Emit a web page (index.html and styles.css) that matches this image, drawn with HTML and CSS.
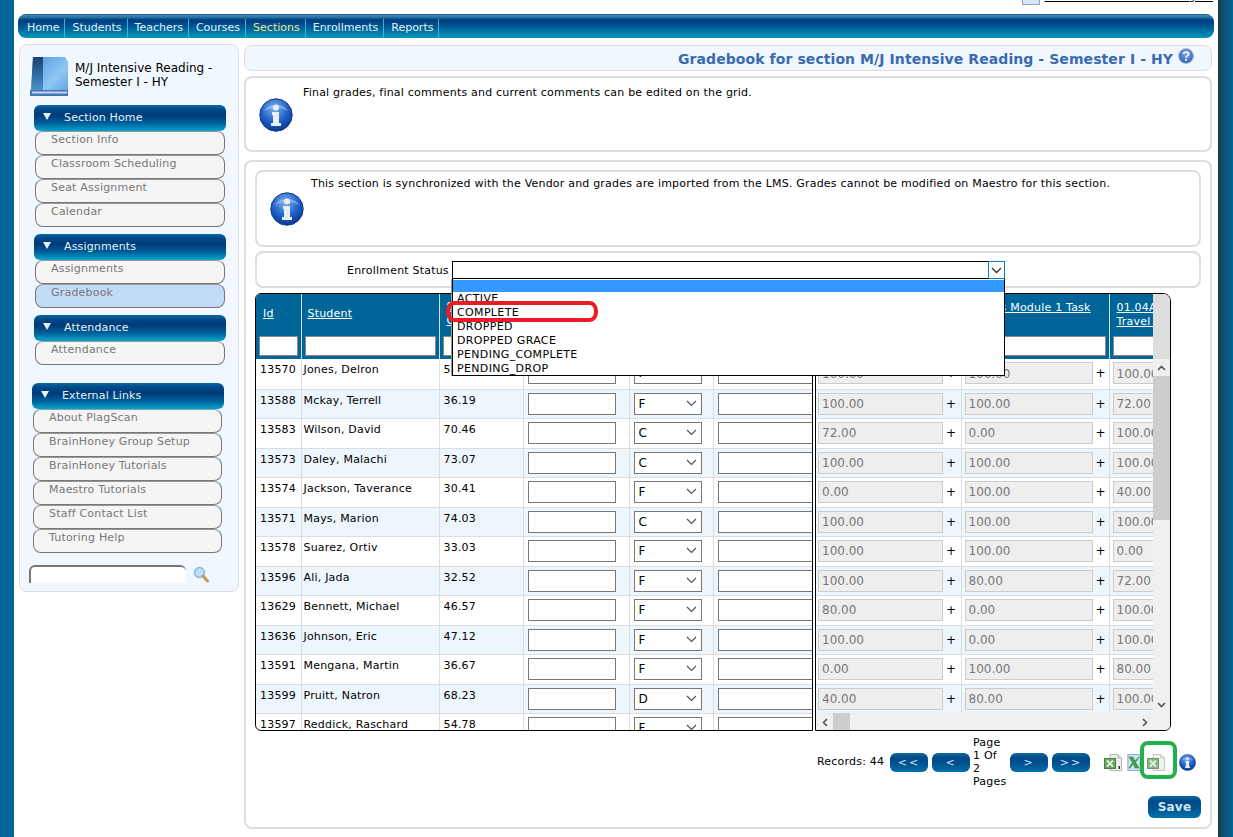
FILE: index.html
```html
<!DOCTYPE html>
<html lang="en">
<head>
<meta charset="utf-8">
<title>Gradebook</title>
<link rel="stylesheet" href="styles.css">
</head>
<body>
<svg class="defs" width="0" height="0" aria-hidden="true">
  <defs>
    <radialGradient id="infoFill" cx="45%" cy="30%" r="75%">
      <stop offset="0" stop-color="#7fb2ee"/>
      <stop offset=".55" stop-color="#1e62c8"/>
      <stop offset="1" stop-color="#0b2f8a"/>
    </radialGradient>
    <symbol id="info" viewBox="0 0 34 34">
      <circle cx="17" cy="17" r="16.2" fill="url(#infoFill)" stroke="#123a86" stroke-width="1"/>
      <path d="M5 13C8 5 26 5 29 13C22 9 12 9 5 13Z" fill="#fff" opacity=".3"/>
      <circle cx="17" cy="9.5" r="3" fill="#e8eef8"/>
      <path d="M13 14H20V25H22V28H12V25H14V17H13Z" fill="#e8eef8"/>
    </symbol>
    <symbol id="sheet" viewBox="0 0 18 17">
      <path d="M6 .5H14L17.500 4V16.500H6Z" fill="#eef0ee" stroke="#b5b9b5"/>
      <path d="M14 .5V4H17.500" fill="#d8dcd8" stroke="#b5b9b5"/>
      <rect x=".5" y="4.500" width="11" height="10" fill="#6da565" stroke="#4a7f4c"/>
      <path d="M3 6.500L9 12.500M9 6.500L3 12.500" stroke="#dff0d8" stroke-width="1.800"/>
    </symbol>
  </defs>
</svg>
<div class="page">
  <div class="strip-left"></div>
  <div class="content">
    <div class="topline">
      <svg class="env" width="18" height="5" viewBox="0 0 18 5"><rect x=".5" y="-6" width="17" height="10.500" fill="#dbe6f5" stroke="#8aa3c8"/></svg>
      <a class="messages" href="#">You have 223 new messages!</a>
    </div>
    <nav class="navbar">
      <a class="nav-link" href="#">Home</a>
      <a class="nav-link" href="#">Students</a>
      <a class="nav-link" href="#">Teachers</a>
      <a class="nav-link" href="#">Courses</a>
      <a class="nav-link nav-active" href="#">Sections</a>
      <a class="nav-link" href="#">Enrollments</a>
      <a class="nav-link" href="#">Reports</a>
    </nav>
    <div class="columns">
      <aside class="sidebar">
        <div class="course">
          <svg class="book" width="40" height="42" viewBox="0 0 40 42">
            <defs>
              <linearGradient id="bookFill" x1="0" y1="0" x2="1" y2="1">
                <stop offset="0" stop-color="#4f92d8"/><stop offset=".6" stop-color="#8fc6f5"/><stop offset="1" stop-color="#5b9cdc"/>
              </linearGradient>
              <linearGradient id="spine" x1="0" y1="0" x2="0" y2="1">
                <stop offset="0" stop-color="#17426f"/><stop offset=".7" stop-color="#3a77b5"/><stop offset="1" stop-color="#4f8fce"/>
              </linearGradient>
            </defs>
            <path d="M4 1H36L39 6V40H1L2 34Z" fill="url(#bookFill)"/>
            <path d="M4 1H14V34H2Z" fill="url(#spine)"/>
            <path d="M1 34H39V40H1Z" fill="#3f78b8"/>
            <path d="M3 35.500H38V37.500H3Z" fill="#d4d0ec"/>
          </svg>
          <div class="course-name">M/J Intensive Reading - Semester I - HY</div>
        </div>

        <div class="menu-group">
          <div class="menu-head"><span class="tri"></span>Section Home</div>
          <a class="menu-item" href="#">Section Info</a>
          <a class="menu-item" href="#">Classroom Scheduling</a>
          <a class="menu-item" href="#">Seat Assignment</a>
          <a class="menu-item" href="#">Calendar</a>
        </div>
        <div class="menu-group">
          <div class="menu-head"><span class="tri"></span>Assignments</div>
          <a class="menu-item" href="#">Assignments</a>
          <a class="menu-item menu-current" href="#">Gradebook</a>
        </div>
        <div class="menu-group">
          <div class="menu-head"><span class="tri"></span>Attendance</div>
          <a class="menu-item" href="#">Attendance</a>
        </div>
        <div class="menu-group menu-external">
          <div class="menu-head"><span class="tri"></span>External Links</div>
          <a class="menu-item" href="#">About PlagScan</a>
          <a class="menu-item" href="#">BrainHoney Group Setup</a>
          <a class="menu-item" href="#">BrainHoney Tutorials</a>
          <a class="menu-item" href="#">Maestro Tutorials</a>
          <a class="menu-item" href="#">Staff Contact List</a>
          <a class="menu-item" href="#">Tutoring Help</a>
        </div>
        <div class="search">
          <input class="search-input" type="text" aria-label="Search">
          <svg width="16" height="17" viewBox="0 0 16 17">
            <circle cx="6.500" cy="6.500" r="5" fill="#bcdcf7" stroke="#8db6da" stroke-width="1.500"/>
            <path d="M10 10L14.500 15" stroke="#c49a5a" stroke-width="3" stroke-linecap="round"/>
          </svg>
        </div>
      </aside>

      <main class="main">
        <div class="title-bar">
          <h1 class="title">Gradebook for section M/J Intensive Reading - Semester I - HY</h1>
          <svg class="help" width="16" height="16" viewBox="0 0 16 16">
            <defs>
              <radialGradient id="helpFill" cx="50%" cy="35%" r="65%">
                <stop offset="0" stop-color="#7ea6e6"/><stop offset="1" stop-color="#2f5fb5"/>
              </radialGradient>
            </defs>
            <circle cx="8" cy="8" r="7.500" fill="url(#helpFill)" stroke="#a9c0e2"/>
            <path d="M5.500 6C5.800 3.300 10.700 3.300 10.700 6C10.700 8 8 7.800 8 9.800" fill="none" stroke="#fff" stroke-width="1.700"/>
            <rect x="7.100" y="11" width="1.800" height="1.800" fill="#fff"/>
          </svg>
        </div>
        <div class="info-box info-top">
          <svg class="info-icon" width="34" height="34"><use href="#info"/></svg>
          <p class="info-text">Final grades, final comments and current comments can be edited on the grid.</p>
        </div>

        <section class="panel">
          <div class="info-box info-inner">
            <svg class="info-icon" width="34" height="34"><use href="#info"/></svg>
            <p class="info-text">This section is synchronized with the Vendor and grades are imported from the LMS. Grades cannot be modified on Maestro for this section.</p>
          </div>

          <div class="filter-box">
            <span class="filter-label">Enrollment Status</span>
            <div class="fake-select">
              <span class="fake-arrow"><svg width="11" height="7" viewBox="0 0 11 7"><path d="M1 1L5.500 5.500L10 1" fill="none" stroke="#333" stroke-width="1.300"/></svg></span>
            </div>
          </div>

          <div class="grid">
            <div class="grid-left">
              <table class="tbl tbl-left">
                <colgroup><col class="c-id"><col class="c-student"><col class="c-grade"><col class="c-final"><col class="c-sel"><col class="c-text"></colgroup>
                <thead>
                  <tr>
                    <th><a class="h-link" href="#">Id</a><input class="h-input" type="text" aria-label="Id"></th>
                    <th><a class="h-link" href="#">Student</a><input class="h-input" type="text" aria-label="Student"></th>
                    <th><a class="h-link" href="#">Semester Grade</a><input class="h-input" type="text" aria-label="Grade"></th>
                    <th><a class="h-link" href="#">Final Grade</a><input class="h-input" type="text" aria-label="Final"></th>
                    <th><a class="h-link" href="#">Letter</a><input class="h-input" type="text" aria-label="Letter"></th>
                    <th><a class="h-link" href="#">Comments</a><input class="h-input" type="text" aria-label="Comments"></th>
                  </tr>
                </thead>
                <tbody>
                  <tr class="r-a"><td>13570</td><td>Jones, Delron</td><td>54.12</td><td><input class="cell-in" type="text"></td><td><select class="cell-sel"><option>F</option></select></td><td><input class="cell-in cell-wide" type="text"></td></tr>
                  <tr class="r-b alt"><td>13588</td><td>Mckay, Terrell</td><td>36.19</td><td><input class="cell-in" type="text"></td><td><select class="cell-sel"><option>F</option></select></td><td><input class="cell-in cell-wide" type="text"></td></tr>
                  <tr class="r-a"><td>13583</td><td>Wilson, David</td><td>70.46</td><td><input class="cell-in" type="text"></td><td><select class="cell-sel"><option>C</option></select></td><td><input class="cell-in cell-wide" type="text"></td></tr>
                  <tr class="r-b alt"><td>13573</td><td>Daley, Malachi</td><td>73.07</td><td><input class="cell-in" type="text"></td><td><select class="cell-sel"><option>C</option></select></td><td><input class="cell-in cell-wide" type="text"></td></tr>
                  <tr class="r-a"><td>13574</td><td>Jackson, Taverance</td><td>30.41</td><td><input class="cell-in" type="text"></td><td><select class="cell-sel"><option>F</option></select></td><td><input class="cell-in cell-wide" type="text"></td></tr>
                  <tr class="r-b alt"><td>13571</td><td>Mays, Marion</td><td>74.03</td><td><input class="cell-in" type="text"></td><td><select class="cell-sel"><option>C</option></select></td><td><input class="cell-in cell-wide" type="text"></td></tr>
                  <tr class="r-a"><td>13578</td><td>Suarez, Ortiv</td><td>33.03</td><td><input class="cell-in" type="text"></td><td><select class="cell-sel"><option>F</option></select></td><td><input class="cell-in cell-wide" type="text"></td></tr>
                  <tr class="r-b alt"><td>13596</td><td>Ali, Jada</td><td>32.52</td><td><input class="cell-in" type="text"></td><td><select class="cell-sel"><option>F</option></select></td><td><input class="cell-in cell-wide" type="text"></td></tr>
                  <tr class="r-a"><td>13629</td><td>Bennett, Michael</td><td>46.57</td><td><input class="cell-in" type="text"></td><td><select class="cell-sel"><option>F</option></select></td><td><input class="cell-in cell-wide" type="text"></td></tr>
                  <tr class="r-b alt"><td>13636</td><td>Johnson, Eric</td><td>47.12</td><td><input class="cell-in" type="text"></td><td><select class="cell-sel"><option>F</option></select></td><td><input class="cell-in cell-wide" type="text"></td></tr>
                  <tr class="r-a"><td>13591</td><td>Mengana, Martin</td><td>36.67</td><td><input class="cell-in" type="text"></td><td><select class="cell-sel"><option>F</option></select></td><td><input class="cell-in cell-wide" type="text"></td></tr>
                  <tr class="r-b alt"><td>13599</td><td>Pruitt, Natron</td><td>68.23</td><td><input class="cell-in" type="text"></td><td><select class="cell-sel"><option>D</option></select></td><td><input class="cell-in cell-wide" type="text"></td></tr>
                  <tr class="r-a"><td>13597</td><td>Reddick, Raschard</td><td>54.78</td><td><input class="cell-in" type="text"></td><td><select class="cell-sel"><option>F</option></select></td><td><input class="cell-in cell-wide" type="text"></td></tr>
                </tbody>
              </table>
            </div>
            <div class="grid-right">
              <div class="grid-right-top">
                <div class="scroll-view">
                  <table class="tbl tbl-right">
                    <colgroup><col class="c-m1"><col class="c-m2"><col class="c-m3"></colgroup>
                    <thead>
                      <tr>
                        <th><a class="h-link" href="#">01.02 Module 1 Task</a><input class="h-input" type="text" aria-label="Task 1"></th>
                        <th><a class="h-link" href="#">Basics Module 1 Task</a><input class="h-input" type="text" aria-label="Task 2"></th>
                        <th><a class="h-link" href="#">01.04A Module Travel Guide</a><input class="h-input" type="text" aria-label="Task 3"></th>
                      </tr>
                    </thead>
                    <tbody>
                      <tr class="r-a"><td><span class="gr"><input class="gr-in" type="text" value="100.00" disabled><i class="plus">+</i></span></td><td><span class="gr"><input class="gr-in" type="text" value="100.00" disabled><i class="plus">+</i></span></td><td><input class="gr-in" type="text" value="100.00" disabled></td></tr>
                      <tr class="r-b alt"><td><span class="gr"><input class="gr-in" type="text" value="100.00" disabled><i class="plus">+</i></span></td><td><span class="gr"><input class="gr-in" type="text" value="100.00" disabled><i class="plus">+</i></span></td><td><input class="gr-in" type="text" value="72.00" disabled></td></tr>
                      <tr class="r-a"><td><span class="gr"><input class="gr-in" type="text" value="72.00" disabled><i class="plus">+</i></span></td><td><span class="gr"><input class="gr-in" type="text" value="0.00" disabled><i class="plus">+</i></span></td><td><input class="gr-in" type="text" value="100.00" disabled></td></tr>
                      <tr class="r-b alt"><td><span class="gr"><input class="gr-in" type="text" value="100.00" disabled><i class="plus">+</i></span></td><td><span class="gr"><input class="gr-in" type="text" value="100.00" disabled><i class="plus">+</i></span></td><td><input class="gr-in" type="text" value="100.00" disabled></td></tr>
                      <tr class="r-a"><td><span class="gr"><input class="gr-in" type="text" value="0.00" disabled><i class="plus">+</i></span></td><td><span class="gr"><input class="gr-in" type="text" value="100.00" disabled><i class="plus">+</i></span></td><td><input class="gr-in" type="text" value="40.00" disabled></td></tr>
                      <tr class="r-b alt"><td><span class="gr"><input class="gr-in" type="text" value="100.00" disabled><i class="plus">+</i></span></td><td><span class="gr"><input class="gr-in" type="text" value="100.00" disabled><i class="plus">+</i></span></td><td><input class="gr-in" type="text" value="100.00" disabled></td></tr>
                      <tr class="r-a"><td><span class="gr"><input class="gr-in" type="text" value="100.00" disabled><i class="plus">+</i></span></td><td><span class="gr"><input class="gr-in" type="text" value="100.00" disabled><i class="plus">+</i></span></td><td><input class="gr-in" type="text" value="0.00" disabled></td></tr>
                      <tr class="r-b alt"><td><span class="gr"><input class="gr-in" type="text" value="100.00" disabled><i class="plus">+</i></span></td><td><span class="gr"><input class="gr-in" type="text" value="80.00" disabled><i class="plus">+</i></span></td><td><input class="gr-in" type="text" value="72.00" disabled></td></tr>
                      <tr class="r-a"><td><span class="gr"><input class="gr-in" type="text" value="80.00" disabled><i class="plus">+</i></span></td><td><span class="gr"><input class="gr-in" type="text" value="0.00" disabled><i class="plus">+</i></span></td><td><input class="gr-in" type="text" value="100.00" disabled></td></tr>
                      <tr class="r-b alt"><td><span class="gr"><input class="gr-in" type="text" value="100.00" disabled><i class="plus">+</i></span></td><td><span class="gr"><input class="gr-in" type="text" value="0.00" disabled><i class="plus">+</i></span></td><td><input class="gr-in" type="text" value="100.00" disabled></td></tr>
                      <tr class="r-a"><td><span class="gr"><input class="gr-in" type="text" value="0.00" disabled><i class="plus">+</i></span></td><td><span class="gr"><input class="gr-in" type="text" value="100.00" disabled><i class="plus">+</i></span></td><td><input class="gr-in" type="text" value="80.00" disabled></td></tr>
                      <tr class="r-b alt"><td><span class="gr"><input class="gr-in" type="text" value="40.00" disabled><i class="plus">+</i></span></td><td><span class="gr"><input class="gr-in" type="text" value="80.00" disabled><i class="plus">+</i></span></td><td><input class="gr-in" type="text" value="100.00" disabled></td></tr>
                    </tbody>
                  </table>
                </div>
                <div class="vscroll">
                  <div class="v-cap"></div>
                  <div class="v-btn"><svg width="9" height="6" viewBox="0 0 9 6"><path d="M1 5L4.500 1.500L8 5" fill="none" stroke="#555" stroke-width="1.600"/></svg></div>
                  <div class="v-thumb"></div>
                  <div class="v-track"></div>
                  <div class="v-btn"><svg width="9" height="6" viewBox="0 0 9 6"><path d="M1 1L4.500 4.500L8 1" fill="none" stroke="#555" stroke-width="1.600"/></svg></div>
                </div>
              </div>
              <div class="hscroll">
                <div class="h-btn"><svg width="6" height="9" viewBox="0 0 6 9"><path d="M5 1L1.500 4.500L5 8" fill="none" stroke="#555" stroke-width="1.600"/></svg></div>
                <div class="h-thumb"></div>
                <div class="h-track"></div>
                <div class="h-btn"><svg width="6" height="9" viewBox="0 0 6 9"><path d="M1 1L4.500 4.500L1 8" fill="none" stroke="#555" stroke-width="1.600"/></svg></div>
              </div>
            </div>
          </div>

          <div class="pager">
            <span class="records">Records: 44</span>
            <button class="btn" type="button">&lt;&lt;</button>
            <button class="btn" type="button">&lt;</button>
            <span class="page-of">Page 1 Of 2 Pages</span>
            <button class="btn" type="button">&gt;</button>
            <button class="btn" type="button">&gt;&gt;</button>
            <svg class="ico ico-a" width="18" height="17" viewBox="0 0 18 17"><use href="#sheet" width="18" height="17"/><rect x="14.500" y="12" width="1.500" height="3" fill="#333"/></svg>
            <svg class="ico ico-b" width="14" height="17" viewBox="0 0 14 18">
              <rect x=".5" y=".5" width="13" height="17" fill="#cfe0f5" stroke="#86a6d0"/>
              <path d="M1 3H6L8 7L12 3H13L9 9L13 15H8L6 11L3 15H1L5 9Z" fill="#3f9a4f"/>
            </svg>
            <svg class="ico ico-c" width="18" height="17"><use href="#sheet"/></svg>
            <svg class="ico ico-d" width="17" height="17"><use href="#info"/></svg>
          </div>
          <div class="save-row"><button class="btn btn-save" type="button">Save</button></div>

          <div class="dropdown">
            <div class="dd-selected"></div>
            <div class="dd-option">ACTIVE</div>
            <div class="dd-option">COMPLETE</div>
            <div class="dd-option">DROPPED</div>
            <div class="dd-option">DROPPED GRACE</div>
            <div class="dd-option">PENDING_COMPLETE</div>
            <div class="dd-option">PENDING_DROP</div>
          </div>
          <div class="mark mark-red"></div>
          <div class="mark mark-green"></div>
        </section>
      </main>
    </div>
  </div>
  <div class="strip-right"></div>
</div>
</body>
</html>
```
FILE: styles.css
```css
* { box-sizing: border-box; }
html, body { margin: 0; padding: 0; height: 100%; }
body {
  background: #fff;
  font-family: "DejaVu Sans", Verdana, sans-serif;
  font-size: 11px;
  letter-spacing: .2px;
  color: #000;
  overflow: hidden;
}
.defs { position: absolute; }
.page { display: flex; height: 837px; overflow: hidden; }
.strip-left { width: 14px; background: #006699; flex: none; }
.strip-right { width: 15px; flex: none; background: linear-gradient(90deg, #1c3a4c, #0b5a80 60%, #006699); }
.content { flex: 1; min-width: 0; }

.topline {
  height: 14px;
  overflow: hidden;
  display: flex;
  justify-content: flex-end;
  align-items: flex-start;
  padding-right: 5px;
}
.env { margin: 0 5px 0 0; }
.messages { color: #000; line-height: 13px; margin-top: -10px; }

.navbar {
  height: 24px;
  margin: 0 4px;
  padding-left: 2px;
  display: flex;
  border-radius: 8px;
  background: linear-gradient(180deg, #0c3f70 0, #3a88b2 1px, #2a7aa6 3px, #003c80 6px, #00508f 11px, #0099bb 100%);
}
.nav-link {
  display: block;
  height: 19px;
  margin-top: 5px;
  line-height: 18px;
  padding: 0 5px 0 7px;
  color: #e6f0f5;
  text-decoration: none;
  border-right: 1px solid #3fb3d3;
  font-size: 11px;
  letter-spacing: 0;
}
.nav-active { color: #f0e68c; }

.columns { display: flex; align-items: flex-start; }
.sidebar {
  width: 220px;
  height: 548px;
  margin: 6px 0 0 5px;
  padding: 11px 0 0 0;
  background: #f0f7ff;
  border: 1px solid #ddd;
  border-radius: 8px;
  flex: none;
}
.course { display: flex; height: 43px; padding-left: 9px; }
.book { flex: none; }
.course-name { width: 150px; padding: 5px 0 0 6px; line-height: 14px; font-size: 12px; letter-spacing: 0; }

.menu-group { margin: 7px 0 0 14px; width: 192px; }
.course + .menu-group { margin-top: 6px; }
.menu-head {
  height: 26px;
  line-height: 25px;
  padding-left: 30px;
  color: #e6f0f5;
  font-size: 11px;
  letter-spacing: .15px;
  border-radius: 6px;
  position: relative;
  background: linear-gradient(180deg, #0a6b9e 0, #004a8a 4px, #003a78 10px, #005f9a 18px, #00a6cf 100%);
}
.tri {
  position: absolute;
  left: 9px;
  top: 8px;
  border-left: 4px solid transparent;
  border-right: 4px solid transparent;
  border-top: 7px solid #e6f0f5;
}
.menu-item {
  display: block;
  height: 24px;
  width: 190px;
  margin-left: 1px;
  padding: 0 0 0 15px;
  line-height: 15px;
  color: #777;
  text-decoration: none;
  background: #f5f5f5;
  border: 1px solid #777;
  border-top-color: #999;
  border-radius: 8px;
}
.menu-current { background: #c2dbf7; }
.menu-external { margin: 18px 0 0 12px; }
.menu-external .menu-item { width: 189px; }

.search { display: flex; align-items: center; margin: 12px 0 0 9px; gap: 7px; }
.search-input {
  width: 157px;
  height: 18px;
  background: #fff;
  border: 0;
  border-top: 2px solid #777;
  border-left: 2px solid #777;
  border-radius: 6px 6px 0 0;
  padding: 0;
}

.main { width: 968px; margin: 7px 0 0 5px; flex: none; }
.title-bar {
  height: 26px;
  background: #f0f7ff;
  border: 1px solid #ddd;
  border-radius: 8px;
  display: flex;
  align-items: center;
  justify-content: flex-end;
  padding: 0 17px 0 0;
}
.title { margin: 0; padding-top: 2px; font-size: 14px; font-weight: bold; color: #3a6ab0; white-space: nowrap; letter-spacing: .08px; }
.help { margin: -4px 0 0 5px; }

.info-box {
  display: flex;
  align-items: flex-start;
  border: 2px solid #ddd;
  border-radius: 8px;
  background: #fff;
}
.info-top { height: 76px; margin-top: 5px; padding: 20px 0 0 13px; }
.info-icon { flex: none; }
.info-text { margin: -12px 0 0 10px; line-height: 14px; }
.info-inner { height: 77px; padding: 20px 0 0 13px; }
.info-inner .info-text { margin: -15px 0 0 7px; }

.panel {
  position: relative;
  height: 669px;
  margin-top: 8px;
  padding: 8px 9px 0;
  border: 2px solid #ddd;
  border-radius: 8px;
  background: #fff;
}

.filter-box {
  height: 37px;
  margin-top: 4px;
  border: 2px solid #ddd;
  border-radius: 8px;
  display: flex;
  align-items: flex-start;
  padding: 8px 0 0 90px;
}
.filter-label { line-height: 20px; width: 105px; }
.fake-select {
  width: 553px;
  height: 18px;
  border: 1px solid #000;
  border-right: 0;
  display: flex;
  justify-content: flex-end;
  background: #fff;
}
.fake-arrow {
  width: 17px;
  height: 18px;
  margin-top: -1px;
  border: 1px solid #0a78d7;
  display: flex;
  align-items: center;
  justify-content: center;
}

.grid { display: flex; height: 438px; margin-top: 5px; gap: 2px; }
.grid-left {
  width: 558px;
  height: 438px;
  overflow: hidden;
  border: 1px solid #000;
  border-radius: 6px 0 0 6px;
}
.grid-right {
  width: 356px;
  height: 438px;
  display: flex;
  flex-direction: column;
  border: 1px solid #000;
  border-radius: 0 8px 6px 0;
  overflow: hidden;
}
.grid-right-top { display: flex; height: 419px; }
.scroll-view { width: 337px; overflow: hidden; flex: none; }

.tbl { table-layout: fixed; border-collapse: collapse; }
.tbl-left { width: 556px; }
.tbl-right { width: 400px; }
.c-id { width: 45px; }
.c-student { width: 138px; }
.c-grade { width: 84px; }
.c-final { width: 106px; }
.c-sel { width: 84px; }
.c-text { width: 99px; }
.c-m1 { width: 145px; }
.c-m2 { width: 148px; }
.c-m3 { width: 107px; }

.tbl th {
  height: 65px;
  background: #006699;
  border-left: 1px solid #d6dde3;
  padding: 0;
  vertical-align: top;
  text-align: left;
  font-weight: normal;
  position: relative;
}
.tbl th:first-child { border-left: 0; }
.h-link {
  display: block;
  height: 39px;
  padding: 6px 4px 0 7px;
  color: #fff;
  line-height: 14px;
  overflow: hidden;
}
.tbl-right .h-link { padding-top: 7px; }
.tbl-left th:nth-child(-n+2) .h-link { padding-top: 13px; }
.tbl-left th:nth-child(2) .h-link { padding-left: 6px; }
.tbl-right th:nth-child(2) .h-link { padding-left: 9px; }
.h-input {
  position: absolute;
  left: 3px;
  right: 3px;
  top: 42px;
  width: calc(100% - 6px);
  height: 20px;
  border: 1px solid #888;
  background: #fff;
  padding: 0;
}
.tbl td {
  border-left: 1px solid #ddd;
  border-bottom: 1px solid #ddd;
  padding: 0;
  vertical-align: top;
  white-space: nowrap;
  overflow: hidden;
}
.tbl td:first-child { border-left: 0; }
.r-a { height: 30px; }
.r-b { height: 29px; }
.alt { background: #eef6fd; }
.tbl-left td:nth-child(-n+3) { padding: 3px 0 0 4px; line-height: 15px; }
.tbl-left td:nth-child(2) { padding-left: 2px; }
.cell-in {
  display: block;
  width: 88px;
  height: 22px;
  margin: 3px 0 0 4px;
  border: 1px solid #767676;
  background: #fff;
  padding: 0;
}
.cell-wide { width: 96px; }
.cell-sel {
  display: block;
  width: 68px;
  height: 22px;
  margin: 3px 0 0 4px;
  padding: 0 0 0 4px;
  border: 1px solid #767676;
  border-radius: 0;
  appearance: none;
  background: #fff url("data:image/svg+xml,%3Csvg xmlns='http://www.w3.org/2000/svg' width='11' height='7'%3E%3Cpath d='M1 1L5.500 5.500L10 1' fill='none' stroke='%23555' stroke-width='1.200'/%3E%3C/svg%3E") no-repeat right 4px center;
  font: 12px "DejaVu Sans", sans-serif;
  color: #000;
}
.gr { display: flex; align-items: flex-start; }
.gr-in {
  display: block;
  height: 22px;
  width: 125px;
  margin: 3px 0 0 2px;
  padding: 1px 3px 0;
  border: 1px solid #ccc;
  background: #eee;
  color: #777;
  font: 12px "DejaVu Sans", sans-serif;
  opacity: 1;
}
.tbl-right td:nth-child(2) .gr-in { width: 128px; margin-left: 3px; }
.tbl-right td:nth-child(3) .gr-in { margin-left: 3px; }
.plus { font-style: normal; font-size: 12px; line-height: 22px; margin: 3px 0 0 3px; }
.tbl-right td:nth-child(2) .plus { margin-left: 3px; }

.vscroll { width: 17px; display: flex; flex-direction: column; flex: none; background: #f0f0f0; }
.v-cap { height: 65px; background: #ddd; }
.v-btn { height: 17px; display: flex; align-items: center; justify-content: center; }
.v-thumb { height: 144px; background: #cdcdcd; }
.v-track { flex: 1; }
.hscroll { height: 18px; display: flex; background: #f0f0f0; flex: none; }
.h-btn { width: 17px; display: flex; align-items: center; justify-content: center; }
.h-thumb { width: 17px; background: #cdcdcd; }
.h-track { flex: 1; }
.hscroll .h-btn:last-child { margin-right: 17px; }

.pager { display: flex; align-items: center; height: 52px; margin-top: 5px; padding-left: 562px; }
.records { width: 73px; margin-top: -1px; }
.btn {
  width: 38px;
  height: 19px;
  border: 0;
  padding: 0;
  margin-right: 4px;
  border-radius: 6px;
  color: #d8e4ee;
  font: 11px "DejaVu Sans", sans-serif;
  letter-spacing: 2px;
  background: linear-gradient(180deg, #0a6b9e 0, #004a8a 5px, #00508f 10px, #0070aa 100%);
}
.page-of { width: 34px; line-height: 13px; margin-right: 3px; margin-left: -1px; }
.ico { flex: none; }
.ico-a { margin-left: 10px; }
.ico-b { margin-left: 5px; }
.ico-c { margin-left: 6px; opacity: .8; }
.ico-d { margin-left: 14px; }
.save-row { display: flex; justify-content: flex-end; margin-top: 8px; }
.btn-save {
  width: 53px;
  height: 22px;
  margin: 0;
  font-weight: bold;
  font-size: 12px;
  letter-spacing: .2px;
}

.dropdown {
  position: absolute;
  left: 206px;
  top: 117px;
  width: 553px;
  height: 97px;
  padding-top: 1px;
  background: #fff;
  border: 1px solid #000;
  border-top: 0;
  box-shadow: -1px 0 0 #999;
  letter-spacing: .35px;
}
.dd-selected { height: 12px; background: #3399ff; }
.dd-option { height: 14px; line-height: 14px; padding-left: 4px; }

.mark { position: absolute; }
.mark-red {
  left: 200px;
  top: 139px;
  width: 152px;
  height: 21px;
  border: 4px solid #ed1c24;
  border-radius: 8px / 10px;
}
.mark-green {
  left: 894px;
  top: 579px;
  width: 37px;
  height: 38px;
  border: 4px solid #22b14c;
  border-radius: 8px;
}
```
